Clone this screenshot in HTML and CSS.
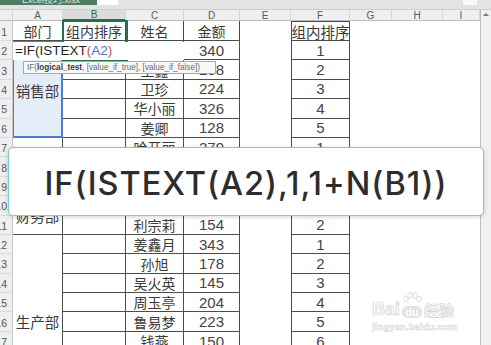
FILE: index.html
```html
<!DOCTYPE html>
<html lang="zh">
<head>
<meta charset="utf-8">
<link rel="stylesheet" href="styles.css">
</head>
<body>
<div class="app">
  <div class="tabbar">
    <div class="tab"><span>Excel技巧.xlsx</span></div>
    <div class="tabwhite"></div>
    <div class="tabctl"></div>
  </div>
  <div class="sheet">
    <div class="sb"><span class="up"></span></div>
    <div class="hd"></div>
    <div class="hd">A</div><div class="hd sel">B</div><div class="hd">C</div><div class="hd">D</div><div class="hd">E</div><div class="hd">F</div><div class="hd">G</div><div class="hd">H</div><div class="hd">I</div>

    <div class="rh">1</div><div class="c a zh">部门</div><div class="c zh">组内排序</div><div class="c zh">姓名</div><div class="c zh">金额</div><div class="c f top zh">组内排序</div>
    <div class="rh">2</div><div class="c a dept ref span5">销售部</div><div class="c"></div><div class="c zh">张小敏</div><div class="c num">340</div><div class="c f num">1</div>
    <div class="rh">3</div><div class="c"></div><div class="c zh">王鑫</div><div class="c num">258</div><div class="c f num">2</div>
    <div class="rh">4</div><div class="c"></div><div class="c zh">卫珍</div><div class="c num">224</div><div class="c f num">3</div>
    <div class="rh">5</div><div class="c"></div><div class="c zh">华小丽</div><div class="c num">326</div><div class="c f num">4</div>
    <div class="rh">6</div><div class="c"></div><div class="c zh">姜卿</div><div class="c num">128</div><div class="c f num">5</div>
    <div class="rh">7</div><div class="c a dept span3">人事部</div><div class="c"></div><div class="c zh">哈开丽</div><div class="c num">279</div><div class="c f num">1</div>
    <div class="rh">8</div><div class="c"></div><div class="c zh">赵敏</div><div class="c num">236</div><div class="c f num">2</div>
    <div class="rh">9</div><div class="c"></div><div class="c zh">刘芳</div><div class="c num">187</div><div class="c f num">3</div>
    <div class="rh">10</div><div class="c a dept span2">财务部</div><div class="c"></div><div class="c zh">陈静</div><div class="c num">265</div><div class="c f num">1</div>
    <div class="rh">11</div><div class="c"></div><div class="c zh">利宗莉</div><div class="c num">154</div><div class="c f num">2</div>
    <div class="rh">12</div><div class="c a dept span9">生产部</div><div class="c"></div><div class="c zh">姜鑫月</div><div class="c num">343</div><div class="c f num">1</div>
    <div class="rh">13</div><div class="c"></div><div class="c zh">孙旭</div><div class="c num">178</div><div class="c f num">2</div>
    <div class="rh">14</div><div class="c"></div><div class="c zh">吴火英</div><div class="c num">145</div><div class="c f num">3</div>
    <div class="rh">15</div><div class="c"></div><div class="c zh">周玉亭</div><div class="c num">204</div><div class="c f num">4</div>
    <div class="rh">16</div><div class="c"></div><div class="c zh">鲁易梦</div><div class="c num">223</div><div class="c f num">5</div>
    <div class="rh">17</div><div class="c"></div><div class="c zh">钱燕</div><div class="c num">150</div><div class="c f num">6</div>
    <div class="rh">18</div><div class="c"></div><div class="c zh">李明</div><div class="c num">212</div><div class="c f num">7</div>
    <div class="rh">19</div><div class="c"></div><div class="c zh">杨柳</div><div class="c num">198</div><div class="c f num">8</div>
    <div class="rh">20</div><div class="c"></div><div class="c zh">何静</div><div class="c num">176</div><div class="c f num">9</div>
  </div>

  <div class="selbox"></div>
  <div class="editor">=IF(ISTEXT<span class="paren">(</span><span class="refa">A2</span><span class="paren">)</span></div>
  <div class="tip">IF(<b>logical_test</b>, [value_if_true], [value_if_false])</div>

  <div class="card">IF(ISTEXT(A2),1,1+N(B1))</div>

  <div class="wm">
    <div class="wm1">
      <span class="bai">Bai</span>
      <span class="duwrap">
        <svg class="paw" width="22" height="14" viewBox="0 0 22 14">
          <ellipse cx="5" cy="7" rx="2.2" ry="2.8" fill="#fff" stroke="#d2d2d2" stroke-width="0.8"/>
          <ellipse cx="9" cy="3.5" rx="2.2" ry="2.8" fill="#fff" stroke="#d2d2d2" stroke-width="0.8"/>
          <ellipse cx="14" cy="3.5" rx="2.2" ry="2.8" fill="#fff" stroke="#d2d2d2" stroke-width="0.8"/>
          <ellipse cx="18" cy="7" rx="2.2" ry="2.8" fill="#fff" stroke="#d2d2d2" stroke-width="0.8"/>
        </svg>
        <span class="du">du</span>
      </span>
      <span class="jy">经验</span>
    </div>
    <div class="wm2">jingyan.baidu.com</div>
  </div>
</div>
</body>
</html>
```
FILE: styles.css
```css
* { box-sizing: border-box; margin: 0; padding: 0; }
html, body { width: 491px; height: 345px; overflow: hidden; background: #fff; }
body { font-family: "Liberation Sans", "Noto Sans CJK SC", sans-serif; color: #3c3c3c; }

.app { position: relative; width: 491px; height: 345px; overflow: hidden; }

/* top tab strip */
.tabbar { height: 10px; background: #e3e3e3; display: flex; align-items: flex-start; border-bottom: 1px solid #cfcfcf; }
.tab { width: 97px; height: 5px; background: #4d7d5e; color: #dfe9e2; font-size: 9px; line-height: 1px; padding-left: 22px; overflow: hidden; white-space: nowrap; }
.tabwhite { width: 21px; height: 5px; background: #fff; }
.tabctl { margin-left: auto; margin-right: 14px; width: 14px; height: 5px; background: #fafafa; }

/* sheet grid */
.sheet {
  display: grid;
  grid-template-columns: 13px 50px 63px 58px 56px 51px 59px 42px 51px 37px 11px;
  grid-template-rows: 11px 20px;
  grid-auto-rows: 19.4px;
}

.hd { background: #efefef; border-right: 1px solid #d5d5d5; border-bottom: 1px solid #bcbcbc; font-size: 10px; color: #585858; display: flex; align-items: center; justify-content: center; }
.hd.sel { background: #dcdcdc; color: #217346; border-bottom: 2px solid #217346; }

.rh { grid-column: 1; background: #efefef; border-right: 1px solid #c6c6c6; border-bottom: 1px solid #dadada; font-size: 10.5px; color: #555; display: flex; align-items: center; justify-content: flex-end; padding: 2px 5px 0 0; overflow: hidden; white-space: nowrap; }

.sb { grid-column: 11; grid-row: 1 / span 21; background: #f1f1f1; border-left: 1px solid #bdbdbd; display: flex; justify-content: center; padding-top: 3px; }
.up { width: 0; height: 0; border-left: 3px solid transparent; border-right: 3px solid transparent; border-bottom: 3px solid #777; }

.c { border-right: 1px solid #4c4c4c; border-bottom: 1px solid #4c4c4c; display: flex; align-items: center; justify-content: center; white-space: nowrap; overflow: hidden; }
.zh { font-family: "Noto Sans CJK SC", sans-serif; font-size: 14px; color: #3a3a3a; }
.num { font-size: 15px; color: #444; }
.a { grid-column: 2; }
.f { grid-column: 7; border-left: 1px solid #4c4c4c; }
.f.top { border-top: 1px solid #4c4c4c; font-size: 14.5px; }

.dept { font-family: "Noto Sans CJK SC", sans-serif; font-size: 14.5px; color: #3a3a3a; }
.span5 { grid-row: span 5; }
.span3 { grid-row: span 3; }
.span2 { grid-row: span 2; }
.span9 { grid-row: span 9; }
.ref { background: #e4edf8; border: 1px solid #4a7fcf; border-right-width: 2px; border-bottom-width: 2px; padding-top: 3px; }

/* overlays */
.selbox { position: absolute; left: 62px; top: 20px; width: 66px; height: 42px; border: 2px solid #217346; }
.editor { position: absolute; left: 13px; top: 42px; width: 171px; height: 18px; background: #fff; font-size: 13.5px; line-height: 18px; padding-left: 2px; color: #1f1f1f; white-space: nowrap; }
.paren { color: #d6564a; }
.refa { color: #3f74c9; }

.tip { position: absolute; left: 23px; top: 61px; width: 193px; height: 13px; background: #f8f8f8; border: 1px solid #a9a9a9; font-size: 8.2px; line-height: 11px; padding-left: 3px; color: #6a6a6a; white-space: nowrap; overflow: hidden; }
.tip b { color: #3a3a3a; }

.card {
  position: absolute; left: 8px; top: 147px; width: 476px; height: 69px;
  background: #fff; border: 1.5px solid #7dcfbe; border-radius: 5px;
  box-shadow: 0 1px 4px rgba(0, 0, 0, 0.18);
  display: flex; align-items: center; justify-content: center;
  padding-top: 3px;
  font-family: Inter, "Open Sans", sans-serif; font-size: 32.5px; font-weight: 500; color: #2d2d2d;
  letter-spacing: 1px;
}

/* watermark */
.wm { position: absolute; left: 372px; top: 288px; width: 95px; color: rgba(255,255,255,0.85); }
.wm1 { display: flex; align-items: flex-end; gap: 1px; height: 30px; }
.bai { font-family: "Liberation Sans", sans-serif; font-weight: 700; font-size: 18px; line-height: 18px; -webkit-text-stroke: 0.7px #cfcfcf; }
.duwrap { display: flex; flex-direction: column; align-items: center; }
.du { font-family: "Liberation Sans", sans-serif; font-weight: 700; font-size: 11px; line-height: 12px; color: #fff; background: #e2e2e2; border-radius: 6px; padding: 0 3px; }
.jy { font-family: "Noto Sans CJK SC", sans-serif; font-weight: 700; font-size: 15px; line-height: 17px; -webkit-text-stroke: 0.6px #cfcfcf; }
.wm2 { font-family: "Liberation Sans", sans-serif; font-weight: 700; font-size: 9.5px; margin-top: 3px; -webkit-text-stroke: 0.5px #d2d2d2; letter-spacing: 0.1px; }
```
